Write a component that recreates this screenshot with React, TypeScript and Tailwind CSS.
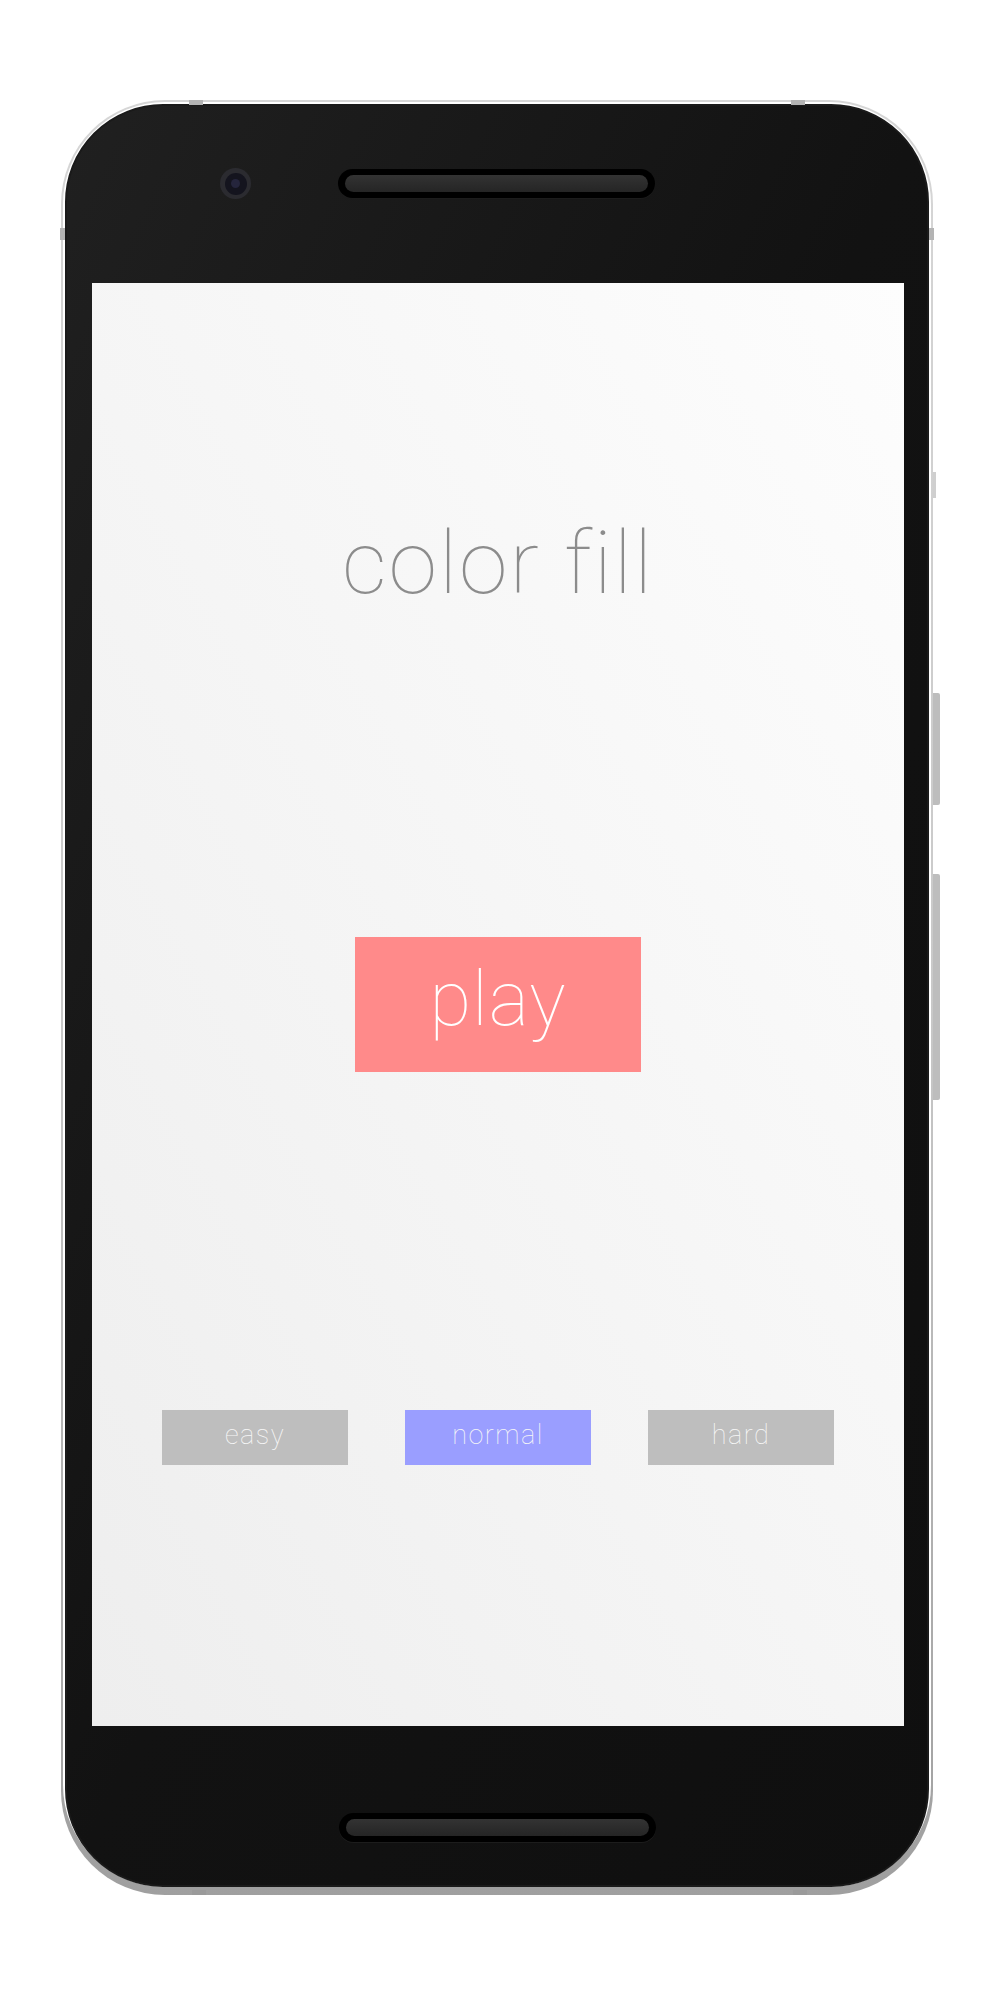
import React from "react";

const levels = [
  { name: "easy", active: false },
  { name: "normal", active: true },
  { name: "hard", active: false },
];

function Speaker() {
  return (
    <div className="w-[317px] h-[29px] rounded-full bg-black p-[6px] pl-[7px] pr-[7px] shadow-[0_1px_0_#1c1c1c]">
      <div className="h-full rounded-full bg-linear-to-b from-[#333] to-[#252525]" />
    </div>
  );
}

function Camera() {
  return (
    <div className="w-[31px] h-[31px] rounded-full bg-[#2b2b30] flex items-center justify-center">
      <div className="w-[22px] h-[22px] rounded-full bg-[#14141e] flex items-center justify-center">
        <div className="w-[9px] h-[9px] rounded-full bg-[#25253c]" />
      </div>
    </div>
  );
}

export default function App() {
  return (
    <div className="w-[1000px] h-[2000px] bg-white pt-[100px] font-[Roboto,sans-serif]">
      <div className="relative ml-[61px] w-[872px] rounded-[104px] bg-linear-to-b from-[#d6d6d6] via-[#c9c9c9] to-[#9f9f9f] p-[2px] pb-[8px]">
        {/* rim antenna marks + side keys */}
        <div className="absolute top-0 left-[128px] w-[14px] h-[5px] bg-[#b4b4b4]" />
        <div className="absolute top-0 left-[730px] w-[14px] h-[5px] bg-[#b4b4b4]" />
        <div className="absolute bottom-0 left-[131px] w-[14px] h-[5px] bg-[#9a9a9a]" />
        <div className="absolute bottom-0 left-[732px] w-[14px] h-[5px] bg-[#9a9a9a]" />
        <div className="absolute top-[128px] -left-[1px] w-[5px] h-[12px] bg-[#b4b4b4]" />
        <div className="absolute top-[128px] -right-[1px] w-[5px] h-[12px] bg-[#b4b4b4]" />
        <div className="absolute top-[372px] -right-[3px] w-[3px] h-[26px] bg-[#cfcfcf]" />
        <div className="absolute top-[593px] -right-[7px] w-[7px] h-[112px] rounded-r-[2px] bg-[#bdbdbd]" />
        <div className="absolute top-[774px] -right-[7px] w-[7px] h-[226px] rounded-r-[2px] bg-[#bdbdbd]" />

        <div className="rounded-[102px] bg-white p-[2px] pb-0">
          <div className="rounded-[98px] bg-linear-to-br from-[#202020] via-[#121212] to-[#0f0f0f] border-2 border-[#1a1a1a] overflow-hidden">
            {/* top bezel */}
            <div className="h-[177px] flex items-start pt-[63px] pl-[153px] gap-[87px]">
              <div className="-mt-[1px]">
                <Camera />
              </div>
              <Speaker />
            </div>

            {/* screen */}
            <div className="ml-[25px] w-[812px] h-[1443px] bg-linear-to-bl from-[#fdfdfd] to-[#eeeeee] flex flex-col items-center">
              <h1 className="mt-[236px] text-[88px] leading-none font-thin text-[#8c8c8c] tracking-[2px]">
                color fill
              </h1>

              <button className="mt-[330px] w-[286px] h-[135px] bg-[#ff8a8a] flex items-center justify-center pb-3">
                <span className="text-[76px] leading-none font-thin text-white tracking-[1px]">play</span>
              </button>

              <div className="mt-[338px] flex gap-[57px]">
                {levels.map(l => (
                  <div
                    key={l.name}
                    className={`w-[186px] h-[55px] flex items-center justify-center pb-1 ${
                      l.active ? "bg-[#9a9eff]" : "bg-[#bebebe]"
                    }`}
                  >
                    <span className="text-[27px] leading-none font-thin text-[#f7f7f7] tracking-[1.5px]">
                      {l.name}
                    </span>
                  </div>
                ))}
              </div>
            </div>

            {/* bottom bezel */}
            <div className="h-[159px] pt-[87px] pl-[272px]">
              <Speaker />
            </div>
          </div>
        </div>
      </div>
    </div>
  );
}
